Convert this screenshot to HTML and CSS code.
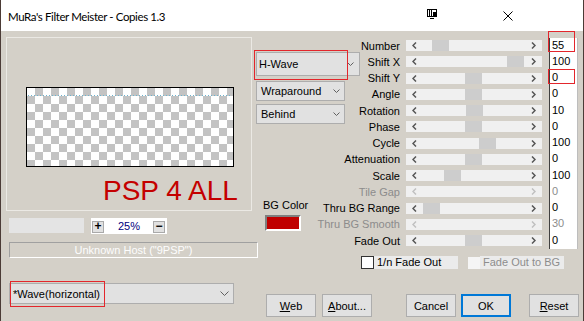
FILE: index.html
```html
<!DOCTYPE html>
<html>
<head>
<meta charset="utf-8">
<link rel="stylesheet" href="styles.css">
</head>
<body>
<div class="window">
  <div class="titlebar">
    <span class="title">MuRa's Filter Meister - Copies 1.3</span>
    <span class="tb-icons">
      <svg class="pin" width="10" height="11" viewBox="0 0 10 11"><rect x="0.5" y="0.5" width="9" height="7" fill="none" stroke="#000"/><line x1="2.5" y1="1" x2="2.5" y2="7" stroke="#000"/><line x1="4.5" y1="1" x2="4.5" y2="7" stroke="#000"/><rect x="6" y="3" width="4" height="4" fill="#000"/><line x1="3" y1="9.5" x2="7" y2="9.5" stroke="#000"/></svg>
      <svg class="close" width="10" height="10" viewBox="0 0 10 10"><path d="M0.5 0.5 L9.5 9.5 M9.5 0.5 L0.5 9.5" stroke="#000" stroke-width="1"/></svg>
    </span>
  </div>
  <div class="client">
    <div class="top">
      <div class="leftcol">
        <div class="frame">
          <div class="canvas"><div class="dots"></div></div>
          <div class="brand">PSP 4 ALL</div>
        </div>
        <div class="zoomrow">
          <div class="progress"></div>
          <div class="zoombox">
            <span class="zbtn">+</span>
            <span class="pct">25%</span>
            <span class="zbtn minus">&minus;</span>
          </div>
        </div>
        <div class="status">Unknown Host ("9PSP")</div>
      </div>
      <div class="midcol">
        <div class="combo hwave"><span>H-Wave</span><svg class="chev" width="7" height="4" viewBox="0 0 7 4"><path d="M0.5 0.5 L3.5 3.5 L6.5 0.5" fill="none" stroke="#606060"/></svg></div>
        <div class="combo wrap"><span>Wraparound</span><svg class="chev" width="7" height="4" viewBox="0 0 7 4"><path d="M0.5 0.5 L3.5 3.5 L6.5 0.5" fill="none" stroke="#606060"/></svg></div>
        <div class="combo behind"><span>Behind</span><svg class="chev" width="7" height="4" viewBox="0 0 7 4"><path d="M0.5 0.5 L3.5 3.5 L6.5 0.5" fill="none" stroke="#606060"/></svg></div>
        <div class="bgcolor">
          <div class="bglabel">BG Color</div>
          <div class="swatch"></div>
        </div>
      </div>
      <div class="rightcol">
        <div class="sliders">
          <div class="row"><div class="lbl"><span>Number</span></div><div class="track"><span class="arr"><svg width="5" height="7" viewBox="0 0 5 7"><path d="M4 0.5 L1 3.5 L4 6.5" fill="none" stroke="#555" stroke-width="1.5"/></svg></span><span class="area"><span class="thumb" style="margin-left:9px"></span></span><span class="arr"><svg width="5" height="7" viewBox="0 0 5 7"><path d="M1 0.5 L4 3.5 L1 6.5" fill="none" stroke="#555" stroke-width="1.5"/></svg></span></div><div class="val">55</div></div>
          <div class="row"><div class="lbl"><span>Shift X</span></div><div class="track"><span class="arr"><svg width="5" height="7" viewBox="0 0 5 7"><path d="M4 0.5 L1 3.5 L4 6.5" fill="none" stroke="#555" stroke-width="1.5"/></svg></span><span class="area"><span class="thumb" style="margin-left:84px"></span></span><span class="arr"><svg width="5" height="7" viewBox="0 0 5 7"><path d="M1 0.5 L4 3.5 L1 6.5" fill="none" stroke="#555" stroke-width="1.5"/></svg></span></div><div class="val">100</div></div>
          <div class="row"><div class="lbl"><span>Shift Y</span></div><div class="track"><span class="arr"><svg width="5" height="7" viewBox="0 0 5 7"><path d="M4 0.5 L1 3.5 L4 6.5" fill="none" stroke="#555" stroke-width="1.5"/></svg></span><span class="area"><span class="thumb" style="margin-left:42px"></span></span><span class="arr"><svg width="5" height="7" viewBox="0 0 5 7"><path d="M1 0.5 L4 3.5 L1 6.5" fill="none" stroke="#555" stroke-width="1.5"/></svg></span></div><div class="val">0</div></div>
          <div class="row"><div class="lbl"><span>Angle</span></div><div class="track"><span class="arr"><svg width="5" height="7" viewBox="0 0 5 7"><path d="M4 0.5 L1 3.5 L4 6.5" fill="none" stroke="#555" stroke-width="1.5"/></svg></span><span class="area"><span class="thumb" style="margin-left:42px"></span></span><span class="arr"><svg width="5" height="7" viewBox="0 0 5 7"><path d="M1 0.5 L4 3.5 L1 6.5" fill="none" stroke="#555" stroke-width="1.5"/></svg></span></div><div class="val">0</div></div>
          <div class="row"><div class="lbl"><span>Rotation</span></div><div class="track"><span class="arr"><svg width="5" height="7" viewBox="0 0 5 7"><path d="M4 0.5 L1 3.5 L4 6.5" fill="none" stroke="#555" stroke-width="1.5"/></svg></span><span class="area"><span class="thumb" style="margin-left:43px"></span></span><span class="arr"><svg width="5" height="7" viewBox="0 0 5 7"><path d="M1 0.5 L4 3.5 L1 6.5" fill="none" stroke="#555" stroke-width="1.5"/></svg></span></div><div class="val">10</div></div>
          <div class="row"><div class="lbl"><span>Phase</span></div><div class="track"><span class="arr"><svg width="5" height="7" viewBox="0 0 5 7"><path d="M4 0.5 L1 3.5 L4 6.5" fill="none" stroke="#555" stroke-width="1.5"/></svg></span><span class="area"><span class="thumb" style="margin-left:42px"></span></span><span class="arr"><svg width="5" height="7" viewBox="0 0 5 7"><path d="M1 0.5 L4 3.5 L1 6.5" fill="none" stroke="#555" stroke-width="1.5"/></svg></span></div><div class="val">0</div></div>
          <div class="row"><div class="lbl"><span>Cycle</span></div><div class="track"><span class="arr"><svg width="5" height="7" viewBox="0 0 5 7"><path d="M4 0.5 L1 3.5 L4 6.5" fill="none" stroke="#555" stroke-width="1.5"/></svg></span><span class="area"><span class="thumb" style="margin-left:56px"></span></span><span class="arr"><svg width="5" height="7" viewBox="0 0 5 7"><path d="M1 0.5 L4 3.5 L1 6.5" fill="none" stroke="#555" stroke-width="1.5"/></svg></span></div><div class="val">100</div></div>
          <div class="row"><div class="lbl"><span>Attenuation</span></div><div class="track"><span class="arr"><svg width="5" height="7" viewBox="0 0 5 7"><path d="M4 0.5 L1 3.5 L4 6.5" fill="none" stroke="#555" stroke-width="1.5"/></svg></span><span class="area"><span class="thumb" style="margin-left:42px"></span></span><span class="arr"><svg width="5" height="7" viewBox="0 0 5 7"><path d="M1 0.5 L4 3.5 L1 6.5" fill="none" stroke="#555" stroke-width="1.5"/></svg></span></div><div class="val">0</div></div>
          <div class="row"><div class="lbl"><span>Scale</span></div><div class="track"><span class="arr"><svg width="5" height="7" viewBox="0 0 5 7"><path d="M4 0.5 L1 3.5 L4 6.5" fill="none" stroke="#555" stroke-width="1.5"/></svg></span><span class="area"><span class="thumb" style="margin-left:21px"></span></span><span class="arr"><svg width="5" height="7" viewBox="0 0 5 7"><path d="M1 0.5 L4 3.5 L1 6.5" fill="none" stroke="#555" stroke-width="1.5"/></svg></span></div><div class="val">100</div></div>
          <div class="row disabled"><div class="lbl"><span>Tile Gap</span></div><div class="track"><span class="arr"><svg width="5" height="7" viewBox="0 0 5 7"><path d="M4 0.5 L1 3.5 L4 6.5" fill="none" stroke="#c0c0c0" stroke-width="1.5"/></svg></span><span class="area"></span><span class="arr"><svg width="5" height="7" viewBox="0 0 5 7"><path d="M1 0.5 L4 3.5 L1 6.5" fill="none" stroke="#c0c0c0" stroke-width="1.5"/></svg></span></div><div class="val">0</div></div>
          <div class="row"><div class="lbl"><span>Thru BG Range</span></div><div class="track"><span class="arr"><svg width="5" height="7" viewBox="0 0 5 7"><path d="M4 0.5 L1 3.5 L4 6.5" fill="none" stroke="#555" stroke-width="1.5"/></svg></span><span class="area"><span class="thumb" style="margin-left:0px"></span></span><span class="arr"><svg width="5" height="7" viewBox="0 0 5 7"><path d="M1 0.5 L4 3.5 L1 6.5" fill="none" stroke="#555" stroke-width="1.5"/></svg></span></div><div class="val">0</div></div>
          <div class="row disabled"><div class="lbl"><span>Thru BG Smooth</span></div><div class="track"><span class="arr"><svg width="5" height="7" viewBox="0 0 5 7"><path d="M4 0.5 L1 3.5 L4 6.5" fill="none" stroke="#c0c0c0" stroke-width="1.5"/></svg></span><span class="area"></span><span class="arr"><svg width="5" height="7" viewBox="0 0 5 7"><path d="M1 0.5 L4 3.5 L1 6.5" fill="none" stroke="#c0c0c0" stroke-width="1.5"/></svg></span></div><div class="val">30</div></div>
          <div class="row"><div class="lbl"><span>Fade Out</span></div><div class="track"><span class="arr"><svg width="5" height="7" viewBox="0 0 5 7"><path d="M4 0.5 L1 3.5 L4 6.5" fill="none" stroke="#555" stroke-width="1.5"/></svg></span><span class="area"><span class="thumb" style="margin-left:42px"></span></span><span class="arr"><svg width="5" height="7" viewBox="0 0 5 7"><path d="M1 0.5 L4 3.5 L1 6.5" fill="none" stroke="#555" stroke-width="1.5"/></svg></span></div><div class="val last">0</div></div>
        </div>
        <div class="checks">
          <span class="cb"></span><span class="cblabel">1/n Fade Out</span>
          <span class="cb off"></span><span class="cblabel off">Fade Out to BG</span>
        </div>
      </div>
    </div>
    <div class="bottom">
      <div class="combo preset"><span>*Wave(horizontal)</span><svg class="chev" width="9" height="5" viewBox="0 0 9 5"><path d="M0.5 0.5 L4.5 4.5 L8.5 0.5" fill="none" stroke="#606060"/></svg></div>
      <div class="buttons">
        <span class="btn web"><u>W</u>eb</span>
        <span class="btn about"><u>A</u>bout...</span>
        <span class="btn cancel">Cancel</span>
        <span class="btn ok">OK</span>
        <span class="btn reset"><u>R</u>eset</span>
      </div>
    </div>
  </div>
  <div class="mark m-hwave"></div>
  <div class="mark m-num"></div>
  <div class="mark m-shifty"></div>
  <div class="mark m-preset"></div>
</div>
</body>
</html>
```

FILE: styles.css
```css
* { box-sizing: border-box; margin: 0; padding: 0; }
html, body { width: 584px; height: 321px; overflow: hidden; background: #d4d0c8; }
body { font-family: "Liberation Sans", Arial, sans-serif; font-size: 11px; color: #000; }

.window {
  width: 584px; height: 321px; position: relative;
  border-left: 1px solid #4b3b36; border-right: 1px solid #4b3b36;
  background: #d4d0c8; display: flex; flex-direction: column;
}

.titlebar {
  height: 31px; flex: none; background: #fff;
  display: flex; align-items: center; padding-left: 7px; padding-right: 70px;
}
.title { font-family: Lato, "Liberation Sans", sans-serif; font-size: 11.5px; letter-spacing: -0.4px; margin-top: 1px; }
.tb-icons { margin-left: auto; display: flex; align-items: center; }
.pin { display: block; margin-right: 66px; margin-top: -2px; }
.close { display: block; margin-top: 1px; }

.client { flex: 1; display: flex; flex-direction: column; }
.top { height: 241px; display: flex; flex: none; }

/* left column */
.leftcol { width: 246px; flex: none; margin-left: 5px; margin-top: 6px; }
.frame {
  height: 174px; border: 1px solid #ebe9e4;
  padding: 49px 0 0 19px;
}
.canvas {
  width: 208px; height: 80px; border: 1px solid #000;
  background: repeating-conic-gradient(#c3c3c3 0 25%, #fff 0 50%) 0 0 / 16px 16px;
  padding-top: 7px;
}
.dots {
  height: 1px; width: 204px; margin-left: 1px;
  background: repeating-linear-gradient(90deg, #6eb4d0 0 1px, transparent 1px 3px);
}
.brand {
  font-size: 28px; line-height: 28px; color: #c40000;
  margin-top: 10px; margin-left: 77px; white-space: nowrap;
}
.zoomrow { display: flex; margin-top: 7px; margin-left: 3px; height: 16px; }
.progress { width: 75px; height: 15px; background: #e4e4e4; }
.zoombox {
  width: 76px; height: 16px; background: #fff; margin-left: 7px;
  display: flex; align-items: flex-start;
}
.zbtn {
  width: 12px; height: 12px; margin-top: 3px; margin-left: 1px;
  background: #e1e1e1; border: 1px solid #a9a9a9;
  font-weight: bold; font-size: 12px; line-height: 9px; text-align: center;
}
.zbtn.minus { margin-left: auto; margin-right: 2px; }
.pct { color: #000080; margin-left: 14px; line-height: 16px; }
.status {
  margin-top: 8px; margin-left: 3px; width: 249px; height: 16px;
  border-top: 1px solid #a0a0a0; border-left: 1px solid #a0a0a0;
  border-right: 1px solid #fff; border-bottom: 1px solid #fff;
  color: #fdfdfd; text-align: center; line-height: 14px; white-space: nowrap;
}

/* middle column */
.midcol { width: 104px; flex: none; margin-left: 4px; }
.combo {
  display: flex; align-items: center; background: #e1e1e1;
  border: 1px solid #adadad; padding-left: 4px; white-space: nowrap;
}
.chev { margin-left: auto; display: block; }
.combo.hwave { height: 24px; width: 104px; margin-top: 21px; padding-left: 2px; }
.combo.hwave .chev { margin-right: 5px; }
.combo.wrap { height: 20px; width: 89px; margin-top: 5px; }
.combo.behind { height: 20px; width: 89px; margin-top: 3px; }
.combo.wrap .chev, .combo.behind .chev { margin-right: 4px; }
.bgcolor { margin-top: 75px; }
.bglabel { margin-left: 7px; line-height: 13px; }
.swatch {
  margin-top: 3px; margin-left: 9px; width: 36px; height: 16px; background: #c00000;
  border-top: 2px solid #7f7f7f; border-left: 2px solid #7f7f7f;
  border-right: 2px solid #fff; border-bottom: 2px solid #fff;
}

/* right column */
.rightcol { width: 218px; flex: none; margin-top: 6.5px; }
.row { display: flex; align-items: center; height: 16.25px; }
.lbl { width: 40px; display: flex; justify-content: flex-end; white-space: nowrap; }
.track {
  width: 136px; height: 11px; margin-left: 6px; background: #f0f0f0;
  display: flex; align-items: stretch;
}
.arr { width: 17px; flex: none; display: flex; align-items: center; justify-content: center; }
.arr svg { display: block; }
.area { flex: 1; display: flex; }
.thumb { width: 17px; background: #cdcdcd; }
.val {
  width: 29px; height: 16.25px; margin-left: 7px; background: #fff;
  border-left: 1px solid #404040; border-right: 1px solid #bdbdbd;
  padding-left: 2px; line-height: 15px;
}
.row.disabled .lbl, .row.disabled .val { color: #8c8c8c; }

.checks { display: flex; align-items: center; margin-top: 7.5px; margin-left: 1px; height: 13px; }
.cb { width: 13px; height: 13px; background: #fff; border: 1px solid #333; }
.cb.off { border: none; width: 12px; height: 12px; margin-left: 10px; background: #f5f5f5; }
.cblabel { width: 84px; height: 13px; background: #ebebeb; padding-left: 3px; line-height: 13px; }
.cblabel.off { color: #8d8d8d; }

/* bottom */
.bottom { display: flex; align-items: flex-start; }
.combo.preset { width: 225px; height: 21px; margin-left: 8px; margin-top: 11px; padding-left: 3px; }
.combo.preset .chev { margin-right: 4px; }
.buttons { display: flex; margin-left: 32px; margin-top: 22px; }
.btn {
  width: 50px; height: 23px; background: #e1e1e1; border: 1px solid #adadad;
  display: flex; align-items: center; justify-content: center;
}
.btn u { text-decoration: underline; }
.about { margin-left: 6px; }
.cancel { margin-left: 34px; }
.ok { margin-left: 5px; border: 2px solid #0078d7; }
.reset { margin-left: 18px; }

/* annotation marks */
.mark { position: absolute; border: 1px solid #e3262c; }
.m-hwave { left: 253px; top: 50px; width: 94px; height: 30px; }
.m-num { left: 547px; top: 31px; width: 27px; height: 21px; }
.m-shifty { left: 547px; top: 69px; width: 27px; height: 15px; }
.m-preset { left: 9px; top: 281px; width: 95px; height: 26px; }
```
